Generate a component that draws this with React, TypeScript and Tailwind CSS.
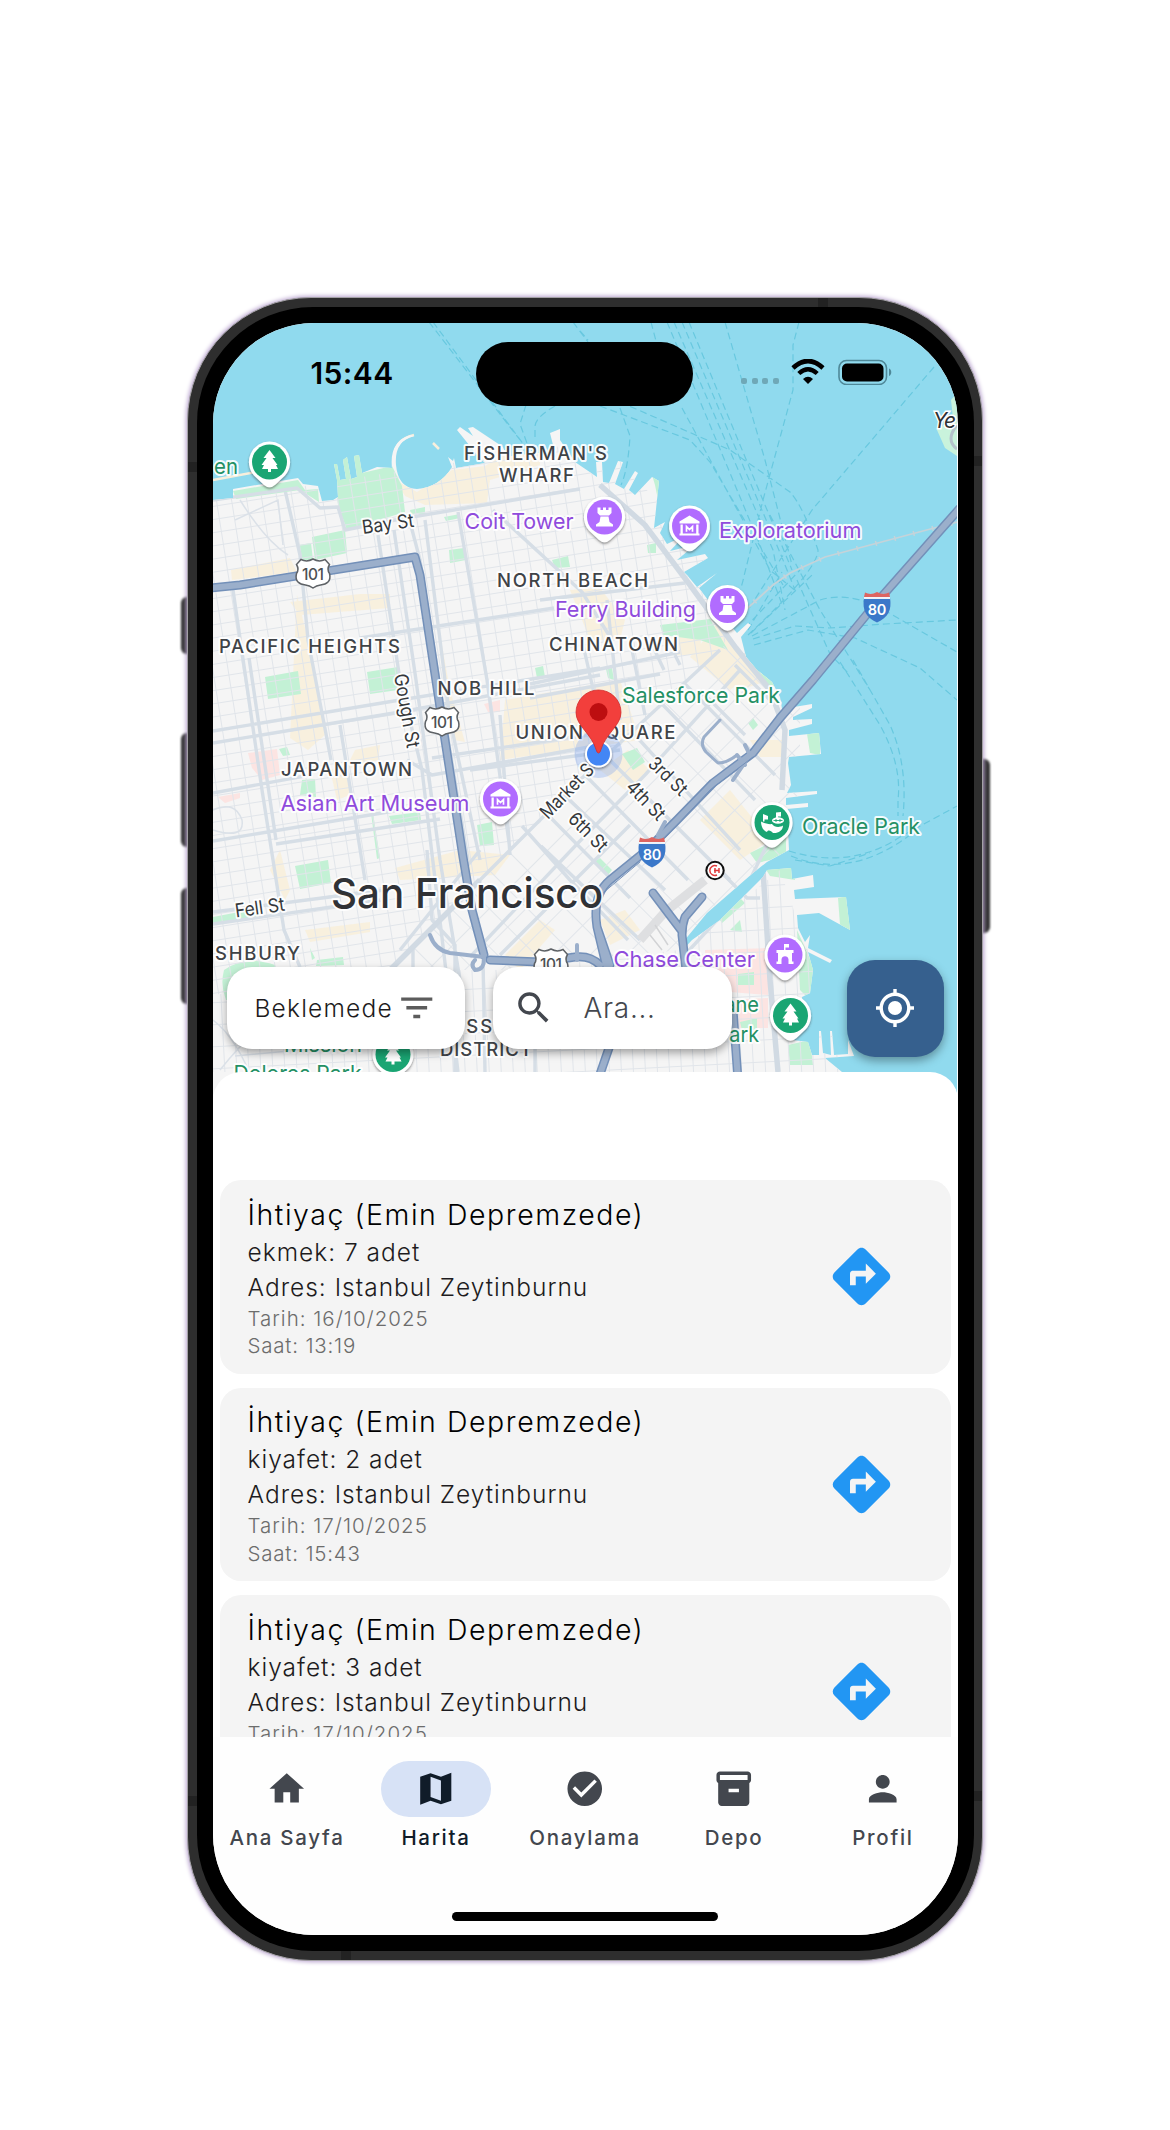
import React from "react";
import { MdCheckCircle, MdDirections, MdFilterList, MdHome, MdPerson, MdSearch } from "react-icons/md";

type LabelProps = { t: string; x: number; y: number; w: number; kind?: "area" | "purple" | "green" | "street" | "city"; rot?: number };

const labelClass = {
  area: "fill-[#3f4347] text-[18.5px] font-medium",
  purple: "fill-[#8f4bdc] text-[22px] font-normal",
  green: "fill-[#249064] text-[22px] font-normal",
  street: "fill-[#35383b] text-[19px] font-normal",
  city: "fill-[#303236] text-[41.5px] font-medium",
};

function Label({ t, x, y, w, kind = "area", rot = 0 }: LabelProps) {
  return (
    <text
      x={x}
      y={y}
      textLength={w}
      lengthAdjust={kind === "area" ? "spacing" : "spacingAndGlyphs"}
      transform={`rotate(${rot} ${x} ${y})`}
      className={labelClass[kind]}
      stroke="#fff"
      strokeWidth={4}
      strokeLinejoin="round"
      paintOrder="stroke"
      strokeOpacity={0.92}
    >
      {t}
    </text>
  );
}

const glyphs = {
  tree: <path d="M0-12L-6-4h3L-8 3h2.500l-2 4H-1.500v3h3V7h7l-2-4H8L3-4h3z" />,
  rook: <path d="M-7-9.500h3v2.500h2.500v-2.500h3v2.500H4v-2.500h3V-4L4.500-1.500h-9L-7-4zM-4-.500h8L5 5l3.500 2.500v2h-17v-2L-5 5z" />,
  museum: (
    <g>
      <path d="M0-10.500L-10-4.500v2h20v-2zM-9-1.500h2.300v9H-9zM6.700-1.500H9v9H6.700zM-10 7.500h20V9.500h-20z" />
      <path d="M-3 5.800V.500L0 3.500l3-3v5.300" fill="none" stroke="#fff" strokeWidth="1.700" />
    </g>
  ),
  arena: <path d="M-1-11h5v3.500H.500V-5H8.500v3H7V6.500h1.500V9H3.500V4.500C3.500 0-3.500 0-3.500 4.500V9h-5V6.500H-7V-2h-1.500v-3H-1z" />,
  ball: (
    <g>
      <path d="M-9-8.500l5 2v3.500h-3.500V-1H-9zM4-10l5-.5V-6H6v2H4zM-11-1C-7 1-3 2 0 1.500c2 3 7 4 11 1.500 0 5-5 8-10 7.500C-1 8-4 7-5 9.500-9 8-11 4-11-1z" />
      <ellipse cx="6" cy="-2" rx="6" ry="3.300" />
      <path d="M1.500-2h9M4-3.500v3M8-3.500v3" stroke="#1aa573" strokeWidth=".9" />
    </g>
  ),
};

function Marker({ x, y, icon, color }: { x: number; y: number; icon: keyof typeof glyphs; color: string }) {
  return (
    <g transform={`translate(${x} ${y})`}>
      <path d="M0-20.500A20.500 20.500 0 0 1 15.500 13.500L6 22.500Q0 28-6 22.500L-15.500 13.500A20.500 20.500 0 0 1 0-20.500Z" fill="#fff" filter="url(#soft)" />
      <circle r="17.500" fill={color} />
      <g fill="#fff">{glyphs[icon]}</g>
    </g>
  );
}

function Shield101({ x, y }: { x: number; y: number }) {
  return (
    <g transform={`translate(${x} ${y})`}>
      <path d="M-12-14q6 3 12-.500q6 3.500 12 .500l4.500 5q-3 5 0 9c2 8-3 11-9 11.500q-4 .500-7.500 3q-3.500-2.500-7.500-3c-6-.500-11-3.500-9-11.500q3-4 0-9z" fill="#fff" stroke="#5e6266" strokeWidth="1.500" />
      <text y="6" textAnchor="middle" textLength="22" className="fill-[#4d5053] text-[15.500px] font-medium">101</text>
    </g>
  );
}

function Shield80({ x, y }: { x: number; y: number }) {
  return (
    <g transform={`translate(${x} ${y})`}>
      <path d="M-13-9h26c2 13-2 20-13 25-11-5-15-12-13-25z" fill="#3b78c9" />
      <path d="M-12-14q6 3 12-.500q6 3.500 12 .500l1 4.500h-26z" fill="#dd6461" />
      <path d="M-13-8.500h26" stroke="#fff" strokeWidth="1.800" />
      <text y="8" textAnchor="middle" textLength="18.500" className="fill-white text-[14.500px] font-semibold">80</text>
    </g>
  );
}

const land =
  "M213 500L233 498V489L298 478 303 484 318 486 322 501 333 500 338 497 337 480 334 464 337 464 340 480 346 479 343 460 347 457 351 479 357 477 354 456 359 455 362 473 377 467 392 468Q389 441 411 435L414 436Q394 441 396 465Q398 488 417 489Q440 487 452 467L448 457 453 461 454 458 456 468 485 463 478 456 457 430 460 427 473 436 468 428 473 427 503 447 507 457 537 453 556 457 550 433 560 429 560 440 575 462 597 477 596 462 602 462 603 482 609 483 618 461 623 462 615 484 624 489 635 471 638 473 629 490 635 495 652 477 659 481 654 528 665 522 660 533 667 544 684 536 670 551 695 545 677 560 705 554 708 558 684 572 687 575 697 587 717 573 699 588 708 600 737 633 748 623 751 625 741 637 746 657 757 670 772 682 780 697 782 709 812 704V708L793 717V720L812 719V724L789 730V736L819 733 821 754 789 757 788 763 791 785 787 793 817 791V794L786 798V805L808 803V807L787 809 789 850 767 862 753 873 707 913 679 947 680 953 692 940 720 920 747 893 763 877 767 870 791 868 792 879 813 875 814 887 794 890 795 899 846 897 850 930 819 913 797 915 798 928 805 942 810 935 808 948 832 960 830 963 808 952 813 970 810 993 802 997 803 1020 793 1040 808 1042 812 1055 819 1055V1031L821 1031 823 1053 831 1055 830 1031 832 1031 834 1055 848 1054V1040L854 1056 825 1058 842 1072V1110H213Z";

const ferries =
  "M429 322L520 440M433 322L524 445M526 405L520 424 528 446M555 406Q534 418 535 428V440M573 322L588 342M620 408L630 436Q628 470 621 485M667 322L760 545 783 607M674 322L773 550 785 610M682 322L781 555 795 590M689 322L792 570M651 322L656 341M580 331L588 340M725 322L765 460 792 565M799 322L793 345V390L763 500 744 576Q740 596 728 615M934 367L812 510 748 610M600 406L690 440 710 462 783 585M620 402L730 450 790 492Q803 506 818 550Q818 570 748 635M682 408L770 570 797 592M745 628L800 570M748 630L782 572M751 633L812 575M752 636L820 600Q845 592 877 606L957 652M753 639L795 626 830 628 885 624 957 620M754 645L808 630 855 638 920 668 957 700M770 515L820 610 870 690M797 580L830 654 850 675M840 662L880 725Q902 765 898 800V816M853 660L890 725Q908 765 903 816M789 851Q850 870 900 837L957 806M791 856Q850 880 910 835M795 860L830 866 870 853";

const major =
  "M213 500L297 488 320 508 338 507 345 530 400 519 580 489M285 490L300 555 308 640 331 760M378 535L400 680 422 770 458 1072M394 530L416 680 440 860 460 980M410 522L420 560 445 720 468 860M425 520L450 720 480 860M458 512L487 680 510 850M360 638L484 619 554 608M213 731L400 700 600 668M213 743L400 712 600 675M213 793L310 775M213 841L400 810M276 844L440 819M233 590L262 790 284 930 300 967M249 658L276 840M340 725L365 880M213 912L400 888M213 924L380 900M407 760L432 775 600 745M432 758L600 733M500 715L510 855M493 510L582 592 612 640M540 600L685 583M530 684L680 652M530 698L660 674M470 770L620 750M607 600L620 720M632 650L645 715M650 640L664 670M675 655L680 665M582 640L600 720M480 850L400 950M427 850L432 920 455 945V1072M483 958L485 1072M413 945V970M390 970L580 780 720 650M470 957L578 843 645 775 740 670M500 955L630 825M535 1040V1072M735 665L770 700M700 690L745 735M600 485L645 525 690 585 736 648 770 690 785 730 782 790M541 846L640 940M522 826L570 880 628 940M545 812L630 898M564 795L665 890M585 775L688 880M610 760L730 880M635 735L740 850M663 705L755 800M683 682L775 775M763 870L770 980 778 1072M680 960L745 890 775 828M760 898L747 898 717 868";

const navItems = [
  { label: "Ana Sayfa", icon: "home", active: false },
  { label: "Harita", icon: "map", active: true },
  { label: "Onaylama", icon: "check", active: false },
  { label: "Depo", icon: "box", active: false },
  { label: "Profil", icon: "person", active: false },
];

const needs = [
  { item: "ekmek: 7 adet", date: "Tarih: 16/10/2025", time: "Saat: 13:19" },
  { item: "kiyafet: 2 adet", date: "Tarih: 17/10/2025", time: "Saat: 15:43" },
  { item: "kiyafet: 3 adet", date: "Tarih: 17/10/2025", time: "" },
];

function CityMap() {
  const purple = "#b16cff";
  const green = "#1aa573";
  return (
    <svg className="absolute -top-px left-0 h-[790px] w-[744px] font-['Inter',sans-serif]" viewBox="213 322 744 790">
      <defs>
        <filter id="soft" x="-30%" y="-30%" width="160%" height="160%">
          <feDropShadow dx="0" dy="1.500" stdDeviation="1.300" floodColor="#333" floodOpacity=".55" />
        </filter>
        <pattern id="west" width="15" height="13" patternUnits="userSpaceOnUse" patternTransform="rotate(-9)">
          <path d="M0 .5H15M.5 0V13" stroke="#e1e5ea" strokeWidth="1" />
        </pattern>
        <pattern id="soma" width="27" height="26" patternUnits="userSpaceOnUse" patternTransform="rotate(-45)">
          <path d="M0 .5H27M.5 0V26" stroke="#e1e5ea" strokeWidth="1" />
        </pattern>
        <pattern id="south" width="12" height="22" patternUnits="userSpaceOnUse" patternTransform="rotate(-3)">
          <path d="M0 .5H12M.5 0V22" stroke="#e1e5ea" strokeWidth="1" />
        </pattern>
        <clipPath id="landClip"><path d={land} /></clipPath>
      </defs>
      <rect x="213" y="322" width="744" height="790" fill="#90daee" />
      <path d={ferries} fill="none" stroke="#68c8df" strokeWidth="1.200" strokeDasharray="7 4" />
      <path d="M957 393L951 400 953 418 937 430 945 448 957 456Z" fill="#c9f3dc" />
      <path d="M957 425Q945 440 957 449" fill="none" stroke="#b5c3cb" strokeWidth="3" />
      <path d="M740 615L773 585 790 573 825 557 938 527 957 522" fill="none" stroke="#c5d3d9" strokeWidth="1.800" />
      <path d="M740 615L773 585 790 573 825 557 938 527 957 522" fill="none" stroke="#c5d3d9" strokeWidth="5" strokeDasharray="1.500 18" />
      <path d="M213 480L262 471M414 435Q392 440 394 464M433 443L439 449" fill="none" stroke="#f8efdc" strokeWidth="2.500" />
      <path d={land} fill="#f5f5f5" />
      <g clipPath="url(#landClip)">
        <path d="M395 480L417 492 452 470 485 466 512 450 540 452V465L490 480 487 503 425 505 405 496ZM231 570L290 558 297 572 232 580ZM290 602L360 594 390 594V608L300 615ZM297 595L308 640 325 735 308 750 290 738ZM432 590L450 690 465 742 455 740ZM570 590L600 588 625 620 620 640 590 640ZM690 657L720 620 750 675 730 690ZM505 700L620 680 640 740 500 760ZM600 770L628 750 650 770 625 790ZM680 625L702 622 700 655 675 655ZM720 660L755 650 770 680 740 690ZM395 868L460 850 510 855 495 875 400 880ZM270 870L280 850 290 890 285 900ZM305 930L370 922V932L310 942ZM505 955L540 920 555 930 520 970ZM700 820L730 790 770 840 740 860ZM600 920L625 910 640 930 610 945ZM355 750L380 745 378 760 345 770ZM330 770L345 765 350 795 337 800ZM750 740H785V757H760Z" fill="#f8f0dc" opacity=".9" />
        <path d="M248 753L277 749 280 775 262 780 252 768ZM218 797L240 793 240 798 225 803ZM484 704L500 700 500 712 488 712ZM705 950L768 948V995L705 990ZM720 1000L768 998V1028H725Z" fill="#fce4e2" />
        <path d="M233 491L298 480 305 490 318 489 319 502 300 490 236 499ZM333 455H362V473L392 466 402 486 405 512 347 530 338 505ZM312 537L345 530 347 553 315 560ZM299 545L311 543 313 560H301ZM449 550L464 548 466 560 450 563ZM410 510L425 507V514H411ZM444 517L460 514V518L446 521ZM552 560L568 556 570 567 555 568ZM265 677L298 671 301 694 268 699ZM367 672L398 667 398 690 370 694ZM535 668L543 666 545 677 537 678ZM279 749L287 747 290 755 283 756ZM302 780L315 779 316 797 300 795ZM295 866L328 860 331 883 300 889ZM389 816L420 812 421 820 392 824ZM477 825L492 822 494 845 480 846ZM371 813L373 813 380 858 377 859ZM213 917L260 908 260 917 213 924ZM224 970Q245 955 275 965L280 985Q240 1000 226 1000Q220 985 224 970ZM317 960L343 957 344 965 316 966ZM310 948L312 960 315 958ZM660 625L710 619 728 650 700 640 663 635ZM752 660L775 685 770 690 750 665ZM622 754L637 748 645 762 633 770ZM594 862L600 858 612 870 608 875ZM750 853L786 835V852L770 860 757 863ZM765 868L795 866V880L770 876ZM807 734L820 732V755L810 753ZM838 898L850 895V930L840 925ZM718 917L740 898 745 903 722 923ZM730 930L740 920 742 932ZM797 930L815 970 810 1000 800 990ZM738 974L754 972V985H738ZM740 1022L757 1018V1030H742ZM788 1045L810 1040 813 1065H790ZM647 545L656 543V553H648ZM652 475L661 480 658 500 655 485ZM748 723L753 718 758 725 753 730ZM606 669L612 668 614 680 608 678Z" fill="#c3f1d5" />
        <path d="M213 500L600 440 750 600 720 650 470 890 390 970 213 995Z" fill="url(#west)" />
        <path d="M390 970L470 890 730 640 800 700V850L680 950 500 970Z" fill="url(#soma)" />
        <path d="M213 995L390 970 500 970 680 950 780 870 850 1072H213Z" fill="url(#south)" />
        <path d="M240 500Q265 540 288 555M235 520L278 500 283 545M213 810Q235 800 242 820Q245 840 213 830M213 1020Q240 1040 260 1100M220 1070Q260 1020 290 1010M235 1056L300 1050" fill="none" stroke="#dbe1e8" strokeWidth="1.500" />
        <path d={major} fill="none" stroke="#d6dee6" strokeWidth="3.400" strokeLinejoin="round" />
        <path d="M600 485L645 525 690 585 736 648 770 690 785 730 782 790M763 870L770 980 778 1072M390 970L480 880" fill="none" stroke="#d1dae3" strokeWidth="5.500" />
        <path d="M640 940L665 912 705 880" fill="none" stroke="#dedfe1" strokeWidth="9" />
        <path d="M650 935L662 950M655 925L668 945" stroke="#d2d3d5" strokeWidth="1.500" />
      </g>
      {/* Freeways: a dark casing below a lighter fill */}
      <g fill="none" strokeLinejoin="round" strokeLinecap="round">
        <path d="M210 588L240 585 415 557 420 575 443 727 463 857 472 910 484 955" stroke="#7390b9" strokeWidth="9" />
        <path d="M210 588L240 585 415 557 420 575 443 727 463 857 472 910 484 955" stroke="#9bafcb" strokeWidth="6" />
        <path d="M960 508L877 602 813 680 780 718 753 753 713 783 677 820 647 850 610 880Q592 895 597 927L610 965M597 927L606 965M610 1045L598 1080M490 960L540 962 575 957Q590 955 600 965M653 893L681 930M702 897L685 917Q682 925 682 935L686 970M733 1010L738 1080" stroke="#7390b9" strokeWidth="9" />
        <path d="M960 508L877 602 813 680 780 718 753 753 713 783 677 820 647 850 610 880Q592 895 597 927L610 965M597 927L606 965M610 1045L598 1080M490 960L540 962 575 957Q590 955 600 965M653 893L681 930M702 897L685 917Q682 925 682 935L686 970M733 1010L738 1080" stroke="#9bafcb" strokeWidth="6" />
        <path d="M720 720L704 737Q700 745 706 752L718 763Q727 763 737 755" stroke="#9bafcb" strokeWidth="3" />
        <path d="M745 745L750 755 733 780M737 755L745 765M665 822L658 835M430 935Q435 950 450 953L484 957M484 957Q485 970 475 970Q470 965 475 960M577 960V945" stroke="#9bafcb" strokeWidth="4" />
        <path d="M665 838L710 790 753 757M604 892L640 862" stroke="#7390b9" strokeWidth="1" />
      </g>
      <Shield101 x={313} y={573.500} />
      <Shield101 x={442} y={721.500} />
      <Shield101 x={551} y={963.500} />
      <Shield80 x={877} y={606.500} />
      <Shield80 x={652} y={851.500} />

      <Label t="UNION SQUARE" x={515.500} y={739} w={160} />
      <circle cx="598.500" cy="754" r="24" fill="#6f9df0" opacity=".3" />
      <circle cx="598.500" cy="754" r="13.500" fill="#fff" filter="url(#soft)" />
      <circle cx="598.500" cy="754" r="11.500" fill="#4386f5" />
      <Label t="Market S" x={548} y={820} w={68} kind="street" rot={-46} />

      <Label t="en" x={214} y={474} w={24} kind="green" />
      <Label t="FİSHERMAN'S" x={464} y={460} w={143} />
      <Label t="WHARF" x={499} y={482} w={75} />
      <Label t="Coit Tower" x={464.500} y={528.500} w={109} kind="purple" />
      <Label t="NORTH BEACH" x={497} y={586.500} w={151} />
      <Label t="Ferry Building" x={555} y={617} w={141} kind="purple" />
      <Label t="Exploratorium" x={719} y={537.500} w={142.500} kind="purple" />
      <Label t="CHINATOWN" x={549} y={650.500} w={129} />
      <Label t="PACIFIC HEIGHTS" x={219} y={652.500} w={181} />
      <Label t="NOB HILL" x={437.500} y={695} w={97} />
      <Label t="Salesforce Park" x={622} y={702.500} w={158} kind="green" />
      <Label t="JAPANTOWN" x={281} y={776} w={131} />
      <Label t="Asian Art Museum" x={280.500} y={810.500} w={189} kind="purple" />
      <Label t="Bay St" x={363} y={534} w={52} kind="street" rot={-8} />
      <Label t="Gough St" x={394} y={675} w={75} kind="street" rot={80} />
      <Label t="3rd St" x={647} y={765} w={46} kind="street" rot={44} />
      <Label t="4th St" x={625} y={788} w={47} kind="street" rot={46} />
      <Label t="6th St" x={567} y={820} w={47} kind="street" rot={45} />
      <Label t="Fell St" x={236} y={917.500} w={50} kind="street" rot={-8} />
      <Label t="Oracle Park" x={802} y={834} w={118} kind="green" />
      <Label t="SHBURY" x={215} y={960} w={85} />
      <Label t="Chase Center" x={613.500} y={966.500} w={141.500} kind="purple" />
      <Label t="San Francisco" x={331} y={908} w={272} kind="city" />
      <Label t="Crane" x={702} y={1012} w={57} kind="green" />
      <Label t="Cove Park" x={663} y={1041.500} w={96} kind="green" />
      <Label t="MISSION" x={440} y={1032.500} w={92} />
      <Label t="DISTRICT" x={440} y={1056} w={92} />
      <Label t="Mission" x={284} y={1051.500} w={78} kind="green" />
      <Label t="Dolores Park" x={233.500} y={1080.500} w={128} kind="green" />
      <text x="933" y="428" textLength="23" className="fill-[#2f3134] text-[21px] italic" stroke="#fff" strokeWidth="3" paintOrder="stroke">Ye</text>

      <Marker x={269.500} y={462} icon="tree" color={green} />
      <Marker x={604.500} y={517} icon="rook" color={purple} />
      <Marker x={689.500} y={526} icon="museum" color={purple} />
      <Marker x={727.500} y={605.500} icon="rook" color={purple} />
      <Marker x={500.500} y={799} icon="museum" color={purple} />
      <Marker x={772} y={822.500} icon="ball" color={green} />
      <Marker x={785} y={955} icon="arena" color={purple} />
      <Marker x={790.500} y={1015.500} icon="tree" color={green} />
      <Marker x={393} y={1054.500} icon="tree" color={green} />

      <circle cx="715" cy="870.500" r="8.700" fill="#fff" stroke="#111" strokeWidth="2" />
      <path d="M717 866a5 5 0 1 0 0 9" fill="none" stroke="#df3b3b" strokeWidth="1.500" />
      <path d="M714 870.500h5M715 868v5M719 868v5" stroke="#df3b3b" strokeWidth="1.500" />

      <path d="M598.500 690a22.500 22.500 0 0 1 22.500 22.500c0 13-16 22-20 37q-1 3.500-2.500 3.500t-2.500-3.500c-4-15-20-24-20-37A22.500 22.500 0 0 1 598.500 690z" fill="#f23f3c" stroke="#d22d2b" strokeWidth=".8" />
      <circle cx="598.500" cy="712" r="9" fill="#bd0e10" />
    </svg>
  );
}

function NavIcon({ name }: { name: string }) {
  if (name === "home") return <MdHome />;
  if (name === "check") return <MdCheckCircle />;
  if (name === "person") return <MdPerson />;
  return (
    <svg viewBox="0 0 24 24" width="1em" height="1em" fill="currentColor">
      {name === "map" ? (
        <path d="M15 5.100L9 3 3 5.020v16.200l6-2.330 6 2.100 6-2.020V2.770L15 5.100zm0 13.790l-6-2.110V5.110l6 2.110v11.670z" />
      ) : (
        <path d="M20 2H4c-1 0-2 .9-2 2v3.010c0 .72.43 1.340 1 1.690V20c0 1.100 1.100 2 2 2h14c.9 0 2-.9 2-2V8.700c.57-.35 1-.97 1-1.690V4c0-1.100-1-2-2-2zm-5 12H9v-2h6v2zm5-7H4V4h16v3z" />
      )}
    </svg>
  );
}

function StatusBar() {
  return (
    <div className="relative flex h-[82px] items-start pt-[19px]">
      <div className="mt-[11px] w-[263.5px] pl-[98px] text-[30px] leading-[40px] font-semibold tracking-[0.4px] text-black">
        15:44
      </div>
      <div className="h-[64px] w-[217px] rounded-full bg-black" />
      <div className="mt-[36px] ml-[48px] flex gap-[4.500px]">
        {[0, 1, 2, 3].map((i) => (
          <span key={i} className="size-[6px] rounded-[2px] bg-[#6fa8b7]" />
        ))}
      </div>
      <svg className="mt-[17px] ml-[12.5px] h-[26px] w-[34px]" viewBox="0 0 34 26" fill="none" stroke="#000">
        <path d="M2 9Q17-5 32 9" strokeWidth="4.600" />
        <path d="M7.800 14.500Q17 6 26.200 14.500" strokeWidth="4.400" />
        <path d="M12 20Q17 15.500 22 20L17 25z" fill="#000" stroke="none" />
      </svg>
      <svg className="mt-[17px] ml-[13px] h-[26px] w-[54px]" viewBox="0 0 54 26">
        <rect x="1" y="1.500" width="47.500" height="24" rx="7.500" fill="none" stroke="#4f8898" strokeWidth="1.600" />
        <rect x="4" y="4.500" width="41.500" height="18" rx="5" />
        <path d="M51 9.500c3 1 3 6.500 0 7.500z" fill="#4f8898" />
      </svg>
    </div>
  );
}

function NeedCard({ item, date, time }: { item: string; date: string; time: string }) {
  return (
    <article className="flex h-[193.5px] shrink-0 items-center justify-between rounded-[21px] bg-[#f4f4f4] pr-[55px] pl-[28px]">
      <div className="h-full pt-[14.5px] font-light whitespace-nowrap">
        <h2 className="text-[28.5px] leading-[40px] font-[350] tracking-[1.55px] text-black">İhtiyaç (Emin Depremzede)</h2>
        <p className="text-[24.5px] leading-[35px] font-[350] tracking-[1px] text-[#1d1b20]">{item}</p>
        <p className="text-[24.5px] leading-[35px] font-[350] tracking-[1px] text-[#1d1b20]">Adres: Istanbul Zeytinburnu</p>
        <p className="text-[20.5px] leading-[27.5px] tracking-[1px] text-[#6c6c6c]">{date}</p>
        <p className="text-[20.5px] leading-[27.5px] tracking-[0.8px] text-[#6c6c6c]">{time}</p>
      </div>
      <MdDirections className="size-[69px] text-[#2296f3]" />
    </article>
  );
}

export default function App() {
  return (
    <main className="h-[2130px] w-[1170px] overflow-hidden bg-white pt-[297px] pl-[187px] font-['Inter',sans-serif]">
      <div className="relative h-[1663.5px] w-[796px]">
        <i className="absolute top-[300px] -left-[6px] h-[57px] w-[12px] rounded-l-[6px] bg-[#303030] blur-[1px]" />
        <i className="absolute top-[436px] -left-[6px] h-[114px] w-[12px] rounded-l-[6px] bg-[#303030] blur-[1px]" />
        <i className="absolute top-[591px] -left-[6px] h-[116px] w-[12px] rounded-l-[6px] bg-[#303030] blur-[1px]" />
        <i className="absolute top-[462px] -right-[7px] h-[174px] w-[12px] rounded-r-[6px] bg-[#303030] blur-[1px]" />
        <div className="relative h-full w-full rounded-[124px] border border-[#a3a1a5] bg-[#2e2e2e] p-[8.5px] shadow-[0_0_4px_1px_#b9a3cf]">
          <i className="absolute top-[164px] left-0 h-[10px] w-[9px] bg-[#222]" />
          <i className="absolute top-[1498px] left-0 h-[10px] w-[9px] bg-[#222]" />
          <i className="absolute top-[158px] right-0 h-[10px] w-[9px] bg-[#222]" />
          <i className="absolute top-[1493px] right-0 h-[10px] w-[9px] bg-[#222]" />
          <i className="absolute top-0 right-[154px] h-[9px] w-[10px] bg-[#222]" />
          <i className="absolute bottom-0 left-[153px] h-[9px] w-[10px] bg-[#222]" />
          <div className="relative h-full w-full rounded-[116px] bg-black p-[16px]">
            <div className="relative flex h-full w-full flex-col overflow-hidden rounded-[101px] bg-[#fefefe]">
              <CityMap />
              <StatusBar />
              <div className="relative mt-[555px] flex h-[97px] items-center px-[14px]">
                <button className="flex h-[82.5px] w-[238.5px] items-center rounded-[25px] bg-white pl-[28px] text-left text-[24.5px] font-[350] text-[#1d1b20] shadow-[0_4px_9px_rgba(0,0,0,0.35)]">
                  <span className="w-[141px] tracking-[1.2px]">Beklemede</span>
                  <MdFilterList className="size-[41.5px] text-[#5c5c5c]" />
                </button>
                <div className="ml-[28px] flex h-[82.5px] w-[238.5px] items-center rounded-[25px] bg-white pl-[20px] text-[28px] font-light tracking-[0.7px] text-[#44474e] shadow-[0_4px_9px_rgba(0,0,0,0.35)]">
                  <MdSearch className="mr-[29px] size-[41.5px] text-[#43474e]" />
                  <span>Ara...</span>
                </div>
                <button className="ml-auto flex size-[97px] items-center justify-center rounded-[28px] bg-[#36608e] shadow-[0_4px_10px_rgba(0,0,0,0.35)]">
                  <svg className="size-[42px]" viewBox="0 0 42 42" fill="none" stroke="#fff" strokeWidth="3.400">
                    <circle cx="21" cy="21" r="13.800" />
                    <circle cx="21" cy="21" r="7" fill="#fff" stroke="none" />
                    <path d="M21 2v6M21 34v6M2 21h6M34 21h6" />
                  </svg>
                </button>
              </div>
              <section className="relative mt-[15px] flex h-[665.5px] shrink-0 flex-col gap-[14px] overflow-hidden rounded-t-[28px] bg-white px-[7px] pt-[108.5px]">
                {needs.map((n, i) => (
                  <NeedCard key={i} {...n} />
                ))}
              </section>
              <nav className="relative grid flex-1 grid-cols-5 bg-[#fefefe]">
                {navItems.map((n) => (
                  <div key={n.label} className={n.active ? "flex flex-col items-center pt-[24px] text-[#101c29]" : "flex flex-col items-center pt-[24px] text-[#43474e]"}>
                    <div className={n.active ? "flex h-[56px] w-[110.5px] items-center justify-center rounded-full bg-[#d7e2f6] text-[41.5px]" : "flex h-[56px] items-center justify-center text-[41.5px]"}>
                      <NavIcon name={n.icon} />
                    </div>
                    <span className="mt-[6px] text-[20.5px] leading-[30px] font-medium tracking-[1.7px] whitespace-nowrap">{n.label}</span>
                  </div>
                ))}
                <i className="absolute bottom-[14px] left-[239px] h-[9px] w-[266px] rounded-full bg-black" />
              </nav>
            </div>
          </div>
        </div>
      </div>
    </main>
  );
}
